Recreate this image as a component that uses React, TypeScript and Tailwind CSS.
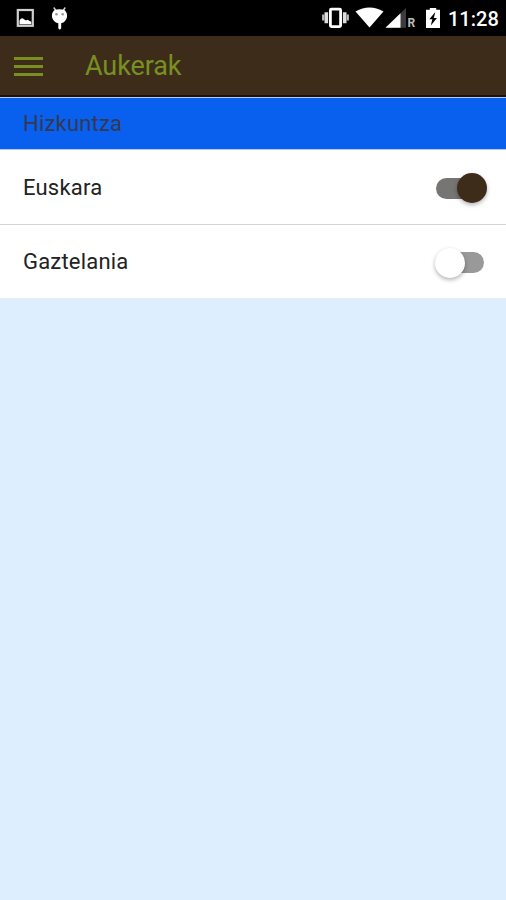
import { useState } from "react";
import clsx from "clsx";

const languages = [
  { id: "eu", label: "Euskara" },
  { id: "es", label: "Gaztelania" },
];

function StatusBar() {
  return (
    <div className="flex h-9 items-start bg-black text-white">
      {/* Notifications */}
      <svg className="ml-4 h-9 w-[19px] shrink-0" viewBox="16 0 19 36">
        <rect x="17.8" y="10" width="15" height="15.8" fill="none" stroke="#cfcfcf" strokeWidth="2.2" />
        <path d="M19.5 24.3V20.5Q21.5 16.8 24 19.2L26 20.5Q28 18.8 29 20.8L31.3 21.8V24.3Z" fill="#fff" />
      </svg>
      <svg className="ml-4 h-9 w-[18px] shrink-0" viewBox="51 0 18 36">
        <path d="M53.7 7.5L56 10.5M65.3 7.5L63 10.5" stroke="#ddd" strokeWidth="1.3" />
        <path d="M54.5 10Q59.5 8.3 64.5 10Q67.5 12.5 67 17Q66 22 61.2 23.3V28Q59.7 31 58.3 28V23.3Q53 22 52 17Q51.5 12.5 54.5 10Z" fill="#fff" />
        <circle cx="56.5" cy="14.3" r="1.3" fill="#999" />
        <circle cx="62.7" cy="14.3" r="1.3" fill="#999" />
      </svg>

      {/* System icons */}
      <svg className="ml-auto h-9 w-[28px] shrink-0" viewBox="321 0 28 36">
        <path d="M323.2 14.5V20.5M347.8 14.5V20.5" stroke="#bbb" strokeWidth="2.2" />
        <path d="M326.3 12.3V23.2M344.7 12.3V23.2" stroke="#ddd" strokeWidth="3.6" />
        <rect x="330.4" y="9.2" width="10.2" height="17.4" rx="1" fill="none" stroke="#fff" strokeWidth="2.8" />
      </svg>
      <svg className="ml-1.5 h-9 w-[29px] shrink-0" viewBox="355 0 29 36">
        <path d="M355.5 11.5Q369.5 3.5 383.5 11.5L369.5 27.5Z" fill="#fff" />
      </svg>
      <svg className="ml-px h-9 w-[21px] shrink-0" viewBox="385 0 21 36">
        <path d="M385.5 27.8L406 8V27.8Z" fill="#3c3c3c" />
        <path d="M385.5 27.8L400.5 13.3V27.8Z" fill="#fff" />
      </svg>
      <span className="ml-[1.5px] mt-[17px] w-[8px] text-[12px] leading-[13px] font-bold text-[#bbb]">R</span>
      <svg className="ml-[9.5px] h-9 w-[16px] shrink-0" viewBox="425 0 16 36">
        <path d="M426 9.8H429.8V8H436.2V9.8H440V28H426Z" fill="#fff" />
        <path d="M435.3 12L429.3 19.3H432.3L430.8 25.5L437 18H433.8Z" fill="#000" />
      </svg>
      <span className="ml-[7px] mr-[7px] mt-[7px] w-[51px] whitespace-nowrap text-[20px] leading-6 font-medium">
        11:28
      </span>
    </div>
  );
}

function Toggle({ on, label, onChange }: { on: boolean; label: string; onChange: () => void }) {
  return (
    <button
      type="button"
      role="switch"
      aria-checked={on}
      aria-label={label}
      onClick={onChange}
      className="mt-0.5 flex h-[30px] w-[54px] items-center"
    >
      <span
        className={clsx(
          "ml-[2px] flex h-[21px] w-12 items-center rounded-full",
          on ? "bg-[#777573]" : "bg-[#999]"
        )}
      >
        <span
          className={clsx(
            "size-[30px] shrink-0 rounded-full shadow-[0_2px_4px_rgba(0,0,0,0.3)]",
            on ? "ml-[21px] bg-[#3d2c1a]" : "-ml-px bg-white"
          )}
        />
      </span>
    </button>
  );
}

export default function App() {
  const [selected, setSelected] = useState("eu");

  return (
    <div className="min-h-screen bg-[#dceeff] font-['Roboto',sans-serif]">
      <StatusBar />

      <header className="flex h-[61px] items-center border-b-2 border-[#1c1208] bg-[#3d2c1a] pt-[2px] text-[#789022]">
        <button type="button" aria-label="Menu" className="ml-[14px] flex w-[29px] flex-col gap-[5px]">
          <span className="h-[3px] bg-[#789022]" />
          <span className="h-[3px] bg-[#789022]" />
          <span className="h-[3px] bg-[#789022]" />
        </button>
        <h1 className="mb-px ml-[42px] text-[27px] leading-8 tracking-[-0.1px]">Aukerak</h1>
      </header>

      <section>
        <h2 className="flex h-[53px] items-center border-y border-[#b4cbf2] bg-[#0a60ee] pl-[23px] text-[22px] tracking-[0.2px] text-[#34394f]">
          Hizkuntza
        </h2>
        <ul className="bg-white text-[22px] tracking-[0.2px] text-[#222]">
          {languages.map((lang) => (
            <li
              key={lang.id}
              className="flex h-[75px] items-center justify-between border-b border-[#d4d4d4] pr-[18px] pl-[23px] last:h-[74px] last:border-[#e6edf3]"
            >
              {lang.label}
              <Toggle
                on={selected === lang.id}
                label={lang.label}
                onChange={() => setSelected(lang.id)}
              />
            </li>
          ))}
        </ul>
      </section>
    </div>
  );
}
